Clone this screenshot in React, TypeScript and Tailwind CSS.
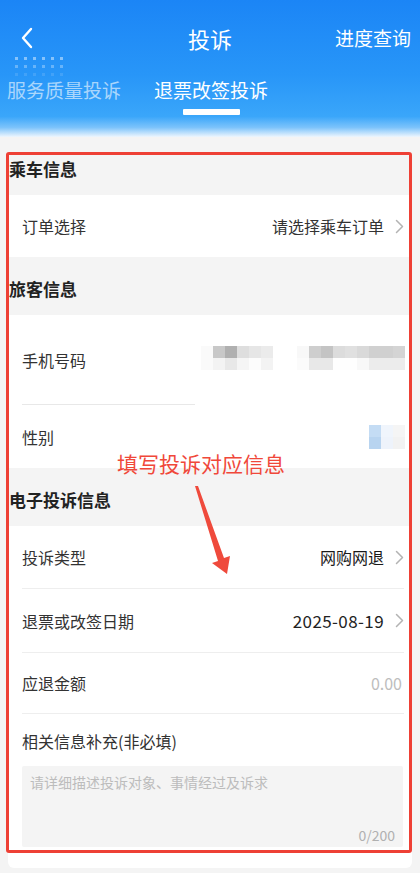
import React from "react";

const FONT = { fontFamily: '"Noto Sans CJK SC", "Noto Sans", sans-serif' };

function Chevron() {
  return (
    <svg width="9" height="15" viewBox="0 0 9 15" className="ml-[11px]">
      <path d="M1.5 1.5 L7.5 7.5 L1.5 13.5" fill="none" stroke="#b3b3b3" strokeWidth="1.5" strokeLinecap="round" strokeLinejoin="round" />
    </svg>
  );
}

function SectionHeader({ title }: { title: string }) {
  return (
    <div className="h-[58px] flex items-center pt-[5px] pl-[1px] bg-[#f4f4f4]">
      <span className="text-[17px] font-bold text-[#222]">{title}</span>
    </div>
  );
}

function Row({
  label,
  value,
  valueClass = "text-[#333] text-[16px]",
  chevron = true,
  h,
  divider = false,
}: {
  label: string;
  value?: React.ReactNode;
  valueClass?: string;
  chevron?: boolean;
  h: string;
  divider?: boolean;
}) {
  return (
    <div className={`bg-white pl-[14px] pr-[8px] ${h}`}>
      <div className={`h-full flex items-center justify-between ${divider ? "border-b border-[#eeeeee]" : ""}`}>
        <span className="text-[16px] text-[#333]">{label}</span>
        <div className={`flex items-center ${chevron ? "" : "pr-[2px]"}`}>
          <span className={valueClass}>{value}</span>
          {chevron && <Chevron />}
        </div>
      </div>
    </div>
  );
}

const phoneL1 = ["#fafafa", "#c8c8c8", "#b0b0b0", "#dedede", "#e6e6e6", "#ebebeb"];
const phoneL2 = ["#fafafa", "#f3f3f3", "#e8e8e8", "#f5f5f5", "#fcfcfc", "#f3f3f3"];
const phoneR1 = ["#f8f8f8", "#cecece", "#c4c4c4", "#dcdcdc", "#e0e0e0", "#d9d9d9", "#d0d0d0", "#d0d0d0", "#d4d4d4"];
const phoneR2 = ["#fbfbfb", "#e8e8e8", "#e8e8e8", "#fefefe", "#fefefe", "#f8f8f8", "#ececec", "#ececec", "#ececec"];

function Mosaic({ rows }: { rows: string[][] }) {
  return (
    <div className="flex flex-col">
      {rows.map((r, i) => (
        <div key={i} className="flex">
          {r.map((c, j) => (
            <div key={j} className="w-[12px] h-[12px]" style={{ backgroundColor: c }} />
          ))}
        </div>
      ))}
    </div>
  );
}

export default function App() {
  return (
    <div className="relative w-[420px] min-h-[873px] bg-[#f4f4f4] overflow-hidden" style={FONT}>
      {/* Header */}
      <div className="relative h-[137px] pt-[18px] bg-[linear-gradient(180deg,#1b85f6_0%,#2896f8_55%,#3aa6fa_85%,#7cc3fb_93%,#eef6fd_100%)]">
        <div className="grid grid-cols-[1fr_auto_1fr] items-center h-[40px]">
          <div className="pl-[20px] flex items-center">
            <svg width="14" height="22" viewBox="0 0 14 22">
              <path d="M11 2 L3 11 L11 20" fill="none" stroke="#ffffff" strokeWidth="2.4" strokeLinecap="round" strokeLinejoin="round" />
            </svg>
          </div>
          <div className="text-[22px] text-white">投诉</div>
          <div className="text-right pr-[9px] text-[19px] text-white">进度查询</div>
        </div>
        <div className="absolute left-[15px] top-[57px] flex flex-col gap-[5px]">
          {[0.45, 0.3, 0.12].map((o, i) => (
            <div key={i} className="flex gap-[6px]">
              {[0, 1, 2, 3, 4, 5].map((j) => (
                <div key={j} className="w-[3px] h-[3px] bg-white" style={{ opacity: o }} />
              ))}
            </div>
          ))}
        </div>
        <div className="flex items-start pl-[7px] gap-[33px] mt-[19px]">
          <div className="text-[19px] leading-[26px] text-white/60">服务质量投诉</div>
          <div className="flex flex-col items-center">
            <div className="text-[19px] leading-[26px] text-white">退票改签投诉</div>
            <div className="w-[57px] h-[6px] bg-white rounded-[1px] mt-[6px]" />
          </div>
        </div>
      </div>

      {/* Content */}
      <div className="px-2 pb-[5px]">
        <div className="rounded-b-[6px] overflow-hidden">
          <SectionHeader title="乘车信息" />
          <Row label="订单选择" value="请选择乘车订单" h="h-[62px]" />
          <SectionHeader title="旅客信息" />
          <div className="bg-white px-[14px] h-[89px]">
            <div className="h-full flex items-center justify-between">
              <span className="text-[16px] text-[#333]">手机号码</span>
              <div className="flex items-center gap-[24px] mr-[-7px] mt-[-4px]">
                <Mosaic rows={[phoneL1, phoneL2]} />
                <Mosaic rows={[phoneR1, phoneR2]} />
              </div>
            </div>
          </div>
          <div className="bg-white h-[1px] flex">
            <div className="ml-[14px] w-[173px] bg-[#e8e8e8]" />
          </div>
          <div className="bg-white px-[14px] h-[63px]">
            <div className="h-full flex items-center justify-between">
              <span className="text-[16px] text-[#333]">性别</span>
              <div className="mr-[-7px]">
                <Mosaic rows={[["#c4dcf4", "#f0f5fc", "#f5f5f5"], ["#b8d4f0", "#eef3fb", "#f2f2f2"]]} />
              </div>
            </div>
          </div>
          <SectionHeader title="电子投诉信息" />
          <Row label="投诉类型" value="网购网退" valueClass="text-[16px] text-[#1a1a1a]" h="h-[63px]" divider />
          <Row label="退票或改签日期" value="2025-08-19" valueClass="text-[17px] tracking-[0.4px] text-[#222]" h="h-[64px]" divider />
          <Row label="应退金额" value="0.00" valueClass="text-[16px] text-[#bdbdbd]" chevron={false} h="h-[61px]" divider />
          <div className="bg-white px-[14px] pt-[16px] pb-[21px]">
            <div className="text-[16px] leading-[22px] text-[#333]">相关信息补充(非必填)</div>
            <div className="mt-[14px] mr-[-5px] h-[81px] bg-[#f4f4f4] rounded-[2px] relative px-[8px] pt-[5px]">
              <div className="text-[14px] leading-[22px] text-[#bcbcbc]">请详细描述投诉对象、事情经过及诉求</div>
              <div className="absolute right-[8px] bottom-[2px] text-[14px] leading-[20px] text-[#b0b0b0]">0/200</div>
            </div>
          </div>
        </div>
      </div>

      {/* Annotations */}
      <div className="absolute left-[6px] top-[152px] w-[406px] h-[701px] border-[3px] border-[#ee4035] rounded-[3px] pointer-events-none" />
      <div className="absolute left-[117px] top-[449px] text-[21px] leading-[28px] text-[#f0483a]">填写投诉对应信息</div>
      <svg className="absolute left-0 top-0 pointer-events-none" width="420" height="873" viewBox="0 0 420 873">
        <polygon points="195,486 198,486 224,558 230,556 227,574 212,563 218,561" fill="#ef4a3c" />
      </svg>
    </div>
  );
}
